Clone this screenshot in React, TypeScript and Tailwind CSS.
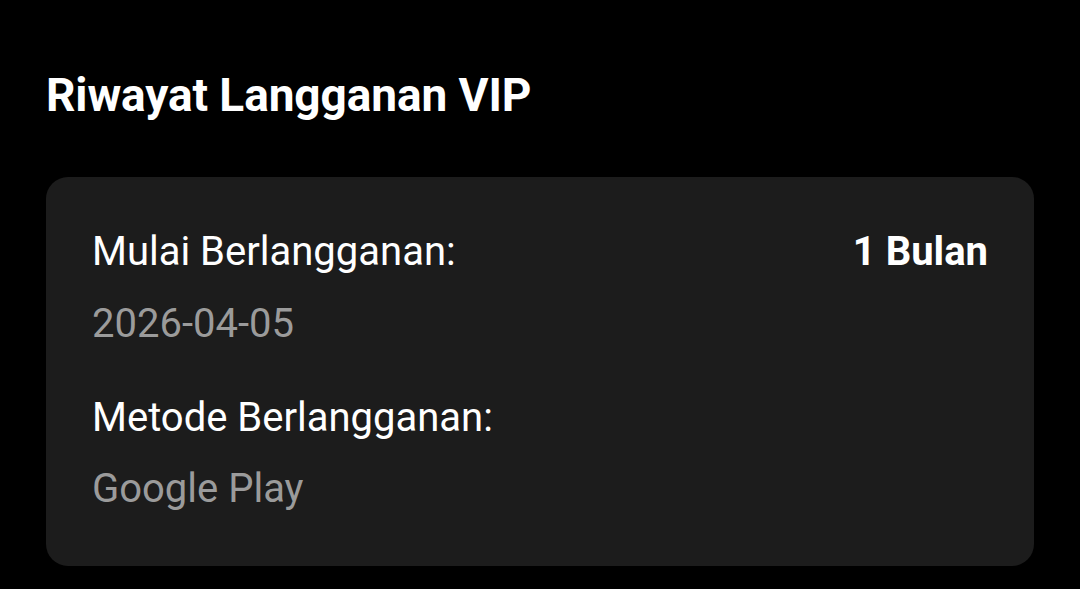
export default function App() {
  return (
    <div className="w-[1080px] h-[589px] bg-black overflow-hidden" style={{ fontFamily: "Roboto, sans-serif" }}>
      <div className="pl-[46px] pr-[46px] pt-[67px]">
        <h1 className="text-[46px] leading-[56px] font-bold text-white tracking-[-0.1px]">Riwayat Langganan VIP</h1>
        <div className="mt-[54px] w-[988px] h-[389px] rounded-[22px] bg-[#1c1c1c] pl-[46px] pr-[46px] pt-[51px]">
          <div className="flex justify-between items-center">
            <span className="text-[40px] leading-[48px] text-white">Mulai Berlangganan:</span>
            <span className="text-[40px] leading-[48px] font-bold text-white">1 Bulan</span>
          </div>
          <div className="mt-[24px] text-[40px] leading-[48px] text-[#9b9b9b]">2026-04-05</div>
          <div className="mt-[46px] text-[40px] leading-[48px] text-white">Metode Berlangganan:</div>
          <div className="mt-[23px] text-[40px] leading-[48px] text-[#9b9b9b]">Google Play</div>
        </div>
      </div>
    </div>
  );
}
